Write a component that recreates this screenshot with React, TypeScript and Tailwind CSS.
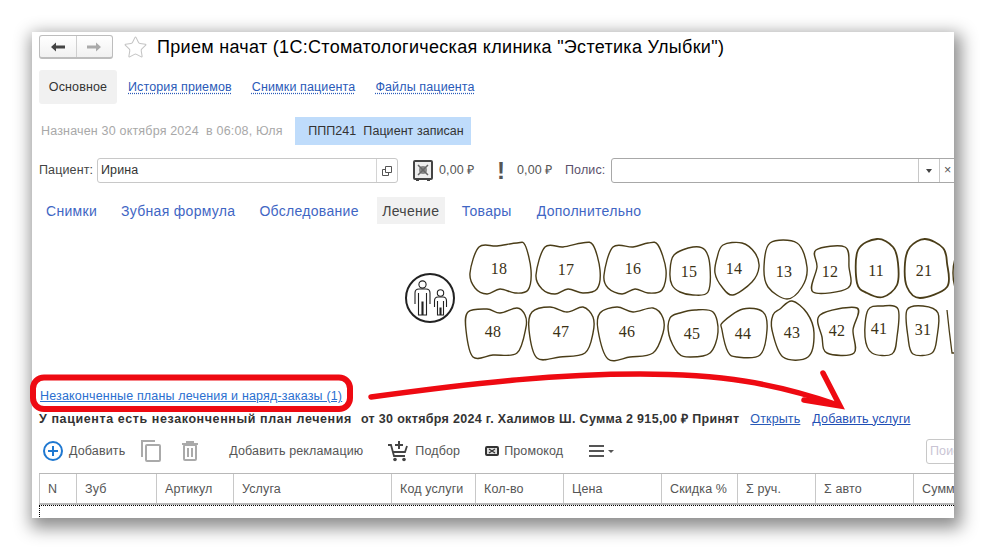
import { Star } from "lucide-react"

type Tooth = { n: number; x: number; y: number; w?: number; pts: number[][] }

const teeth: Tooth[] = [
  { n: 18, x: 499, y: 268, pts: [[479,247],[497,246],[517,243],[525,245],[531,270],[528,290],[515,293],[500,289],[487,294],[475,288],[470,273]] },
  { n: 17, x: 566, y: 269, pts: [[545,247],[563,247],[582,243],[593,245],[600,270],[597,289],[583,293],[568,289],[555,294],[542,289],[536,275]] },
  { n: 16, x: 633, y: 268, pts: [[613,247],[633,247],[648,243],[658,245],[666,270],[662,290],[648,293],[635,289],[622,294],[608,288],[604,275]] },
  { n: 15, x: 689, y: 271, pts: [[693,247],[705,250],[710,267],[708,292],[693,295],[680,292],[672,285],[670,272],[674,255]] },
  { n: 14, x: 734, y: 268, pts: [[723,245],[742,243],[755,253],[759,267],[752,282],[733,295],[722,287],[715,273],[717,258]] },
  { n: 13, x: 784, y: 271, pts: [[770,243],[797,243],[807,267],[802,287],[787,299],[768,287],[764,267]] },
  { n: 12, x: 830, y: 271, pts: [[816,250],[845,247],[849,267],[848,288],[813,292],[817,267]] },
  { n: 11, x: 876, y: 270, w: 1.8, pts: [[877,239],[893,247],[898,263],[897,285],[883,297],[867,293],[857,283],[858,250]] },
  { n: 21, x: 924, y: 270, w: 1.8, pts: [[925,239],[943,248],[947,263],[947,287],[920,298],[907,287],[905,263],[910,247]] },
  { n: 48, x: 493, y: 331, pts: [[468,312],[487,309],[500,313],[517,308],[525,315],[526,327],[517,353],[493,355],[473,357],[466,330]] },
  { n: 47, x: 561, y: 331, pts: [[532,312],[550,307],[567,312],[583,307],[593,317],[593,333],[585,353],[560,357],[537,358],[529,330]] },
  { n: 46, x: 627, y: 331, pts: [[600,313],[617,307],[633,312],[653,308],[663,318],[663,333],[653,353],[630,357],[608,359],[598,330]] },
  { n: 45, x: 692, y: 333, pts: [[695,310],[713,312],[718,332],[710,353],[690,357],[678,353],[669,335],[670,318],[680,313]] },
  { n: 44, x: 743, y: 333, pts: [[723,322],[743,309],[763,312],[767,330],[760,355],[737,357],[728,352],[722,330]] },
  { n: 43, x: 792, y: 332, pts: [[780,309],[792,301],[807,313],[814,333],[808,357],[783,357],[772,330],[773,315]] },
  { n: 42, x: 837, y: 330, pts: [[820,315],[857,308],[853,330],[854,353],[827,353],[822,337]] },
  { n: 41, x: 879, y: 328, pts: [[868,310],[882,306],[898,309],[897,337],[892,354],[872,353],[865,337]] },
  { n: 31, x: 923, y: 329, pts: [[907,310],[923,306],[938,313],[937,337],[932,353],[913,354],[908,337]] },
]

// closed catmull-rom through the traced points
function outline(pts: number[][]) {
  const n = pts.length
  let d = `M${pts[0][0]} ${pts[0][1]}`
  for (let i = 0; i < n; i++) {
    const p0 = pts[(i - 1 + n) % n]
    const p1 = pts[i]
    const p2 = pts[(i + 1) % n]
    const p3 = pts[(i + 2) % n]
    const c1 = [p1[0] + (p2[0] - p0[0]) / 6, p1[1] + (p2[1] - p0[1]) / 6]
    const c2 = [p2[0] - (p3[0] - p1[0]) / 6, p2[1] - (p3[1] - p1[1]) / 6]
    d += `C${c1[0]} ${c1[1]} ${c2[0]} ${c2[1]} ${p2[0]} ${p2[1]}`
  }
  return d + "Z"
}

const columns = [
  { title: "N", w: 38 },
  { title: "Зуб", w: 80 },
  { title: "Артикул", w: 77 },
  { title: "Услуга", w: 158 },
  { title: "Код услуги", w: 84 },
  { title: "Кол-во", w: 88 },
  { title: "Цена", w: 98 },
  { title: "Скидка %", w: 76 },
  { title: "Σ руч.", w: 78 },
  { title: "Σ авто", w: 98 },
  { title: "Сумма", w: 60 },
]

const dottedLink = "text-[#2a5ab8] underline decoration-dotted underline-offset-2"

function TeethChart() {
  return (
    <svg viewBox="400 235 554 130" className="block w-[554px] h-[130px] ml-[361px]">
      {/* adult + child icon */}
      <circle cx="430" cy="298" r="24" fill="none" stroke="#222" strokeWidth="2" />
      <g fill="none" stroke="#222" strokeWidth="1.1">
        <circle cx="422.5" cy="284.5" r="3.6" />
        <path d="M415 304v-11q0-4 4-4h7q4 0 4 4v11M418.5 293v22h3.5v-13h1v13h3.5v-22" />
        <circle cx="440.5" cy="293" r="3.2" />
        <path d="M434.5 307v-6q0-4 3.5-4h5q3.5 0 3.5 4v6M437.5 301v14h2.5v-7h1v7h2.5v-14" />
      </g>
      {teeth.map((t) => (
        <g key={t.n}>
          <path d={outline(t.pts)} fill="none" stroke="#4a3d18" strokeWidth={t.w ?? 1.4} />
          <text x={t.x} y={t.y + 5.5} textAnchor="middle" fontSize="16" fill="#3b3115" fontFamily="'Liberation Serif', serif">
            {t.n}
          </text>
        </g>
      ))}
      {/* next teeth, cut by the window edge */}
      <path d="M960 250q-7 8-7 23t7 24" fill="none" stroke="#4a3d18" strokeWidth="1.5" />
      <path d="M947 310q2 20 5 43h8" fill="none" stroke="#4a3d18" strokeWidth="1.3" />
    </svg>
  )
}

function Annotation() {
  return (
    <svg viewBox="0 0 986 551" className="absolute left-0 top-0 w-[986px] h-[551px] pointer-events-none">
      <rect x="33" y="377.5" width="317" height="31.5" rx="11" fill="none" stroke="#ee0a12" strokeWidth="6" />
      <path d="M371 397C480 382 560 374 640 374S775 383 838 405" fill="none" stroke="#ee0a12" strokeWidth="5.5" strokeLinecap="round" />
      <path d="M823 373L840 406L804 400" fill="none" stroke="#ee0a12" strokeWidth="5.5" strokeLinecap="round" />
    </svg>
  )
}

export default function App() {
  return (
    <div className="relative w-[986px] h-[551px] overflow-hidden bg-white pt-8 pl-8 font-['Liberation_Sans',Arial,sans-serif]">
      <div className="w-[922px] h-[486px] overflow-hidden bg-white shadow-[3px_6px_16px_4px_rgba(0,0,0,0.45)] pl-[7px] text-[12.5px] tracking-[0.13px] text-[#444]">
        {/* Title */}
        <div className="flex items-center h-6 mt-[3px]">
          <div className="flex w-[74px] h-6 rounded-[3px] border border-[#bdbdbd] border-b-2 bg-gradient-to-b from-white to-[#f1f1f1]">
            <div className="flex-1 flex items-center justify-center border-r border-[#cfcfcf]">
              <svg viewBox="0 0 14 10" className="w-[14px] h-[10px]"><path d="M0 5l5-4.5V3.5h9v3H5v3z" fill="#444" /></svg>
            </div>
            <div className="flex-1 flex items-center justify-center">
              <svg viewBox="0 0 14 10" className="w-[14px] h-[10px]"><path d="M14 5L9 .5V3.5H0v3h9v3z" fill="#aaa" /></svg>
            </div>
          </div>
          <Star className="ml-[10px] w-[25px] h-[25px] text-[#c4c4c4]" strokeWidth={1} />
          <h1 className="ml-[9px] text-[18px] leading-6 tracking-[0.3px] text-black">Прием начат (1С:Стоматологическая клиника "Эстетика Улыбки")</h1>
        </div>

        {/* Form pages */}
        <div className="flex items-center h-[34px] mt-[11px]">
          <div className="w-[78px] h-full flex items-center justify-center rounded-[3px] bg-[#f1f1f1] text-[#333]">Основное</div>
          <a className={`ml-[11px] ${dottedLink}`}>История приемов</a>
          <a className={`ml-5 ${dottedLink}`}>Снимки пациента</a>
          <a className={`ml-5 ${dottedLink}`}>Файлы пациента</a>
        </div>

        {/* Status */}
        <div className="flex items-center h-7 mt-[13px] pt-px">
          <span className="ml-[2px] w-[254px] tracking-[0.18px] text-[#a8a8a8] whitespace-pre">Назначен 30 октября 2024  в 06:08, Юля</span>
          <span className="w-[176px] h-7 -mt-px pl-[6px] flex items-center justify-center bg-[#bfdcfb] tracking-[0.05px] text-[#333] whitespace-pre">ППП241  Пациент записан</span>
        </div>

        {/* Patient */}
        <div className="flex items-center h-[25px] mt-[13px] [&>*]:shrink-0">
          <span className="w-[58px] text-[#444]">Пациент:</span>
          <div className="flex w-[301px] h-[25px] rounded-[3px] border border-[#c8c8c8]">
            <span className="flex-1 pl-[3px] leading-[23px] text-[#333]">Ирина</span>
            <div className="w-[21px] flex items-center justify-center border-l border-[#d4d4d4]">
              <svg viewBox="0 0 10 10" className="w-[10px] h-[10px]" fill="none" stroke="#555"><path d="M3.5.5h6v6h-6zM3.5 3.5h-3v6h6v-3" /></svg>
            </div>
          </div>
          <svg viewBox="0 0 20 22" className="ml-[15px] w-5 h-[22px]">
            <rect x="1" y="1" width="18" height="18" rx="1" fill="#eee" stroke="#444" strokeWidth="2" />
            <path d="M3 20h3M14 20h3" stroke="#444" strokeWidth="2" />
            <circle cx="10" cy="10" r="4" fill="#888" />
            <path d="M5 5l10 10M15 5L5 15" stroke="#666" strokeWidth="1.5" />
          </svg>
          <span className="ml-[6px] w-[50px] text-[#555]">0,00 ₽</span>
          <span className="w-[24px] text-center text-[24px] leading-none font-bold text-[#555]">!</span>
          <span className="ml-[4px] w-[48px] text-[#555]">0,00 ₽</span>
          <span className="w-[46px] text-[#5b4f6b]">Полис:</span>
          <div className="flex w-[360px] h-[25px] rounded-l-[3px] border border-[#a8a8a8]">
            <div className="flex-1" />
            <div className="w-[21px] flex items-center justify-center border-l border-[#c8c8c8]">
              <span className="border-x-[3px] border-t-[4px] border-x-transparent border-t-[#444]" />
            </div>
            <div className="w-[31px] pl-[4px] leading-[22px] border-l border-[#c8c8c8] text-[#555]">×</div>
          </div>
        </div>

        {/* Tabs */}
        <div className="flex items-center h-[27px] mt-[14px] text-sm tracking-[0.3px] text-[#3f66c4]">
          <span className="ml-[7px]">Снимки</span>
          <span className="ml-6">Зубная формула</span>
          <span className="ml-6">Обследование</span>
          <span className="ml-[18px] w-[68px] h-full flex items-center justify-center bg-[#f1f1f1] text-[#444]">Лечение</span>
          <span className="ml-[17px]">Товары</span>
          <span className="ml-[25px]">Дополнительно</span>
        </div>

        <div className="mt-[11px]">
          <TeethChart />
        </div>

        {/* Plans */}
        <div className="h-4 mt-[23px] ml-px leading-4">
          <a className="text-[#2a6fd0] underline underline-offset-1 tracking-[0.17px]">Незаконченные планы лечения и наряд-заказы (1)</a>
        </div>
        <div className="flex items-center h-4 mt-[7px] whitespace-pre">
          <b className="text-[#333] tracking-[0.6px]">У пациента есть незаконченный план лечения</b>
          <b className="ml-[9px] text-[#333] tracking-[0.32px]">от 30 октября 2024 г. Халимов Ш. Сумма 2 915,00 ₽ Принят</b>
          <a className="ml-[11px] text-[#2a5ab8] underline">Открыть</a>
          <a className="ml-3 text-[#1f4fb5] underline">Добавить услуги</a>
        </div>

        {/* Toolbar */}
        <div className="flex items-center h-[26px] mt-[11px] text-[#555] [&>*]:shrink-0">
          <svg viewBox="0 0 20 20" className="ml-1 w-5 h-5" fill="none" stroke="#1f78d1" strokeWidth="2"><circle cx="10" cy="10" r="9" /><path d="M10 5v10M5 10h10" /></svg>
          <span className="ml-[6px]">Добавить</span>
          <svg viewBox="0 0 20 22" className="ml-[16px] w-5 h-[22px]" fill="none" stroke="#aaa" strokeWidth="2">
            <path d="M1 17V1h13" />
            <rect x="5" y="5" width="14" height="16" rx="1" />
          </svg>
          <svg viewBox="0 0 16 20" className="ml-[21px] w-4 h-5" fill="none" stroke="#aaa">
            <path d="M0 3h16M5 3V1h6v2" strokeWidth="2" />
            <rect x="2" y="4" width="12" height="15" rx="1" strokeWidth="2" />
            <path d="M6 7v9M10 7v9" strokeWidth="2" />
          </svg>
          <span className="ml-[31px]">Добавить рекламацию</span>
          <svg viewBox="0 0 20 21" className="ml-[25px] w-5 h-[21px]" fill="none" stroke="#444">
            <path d="M0 4h3l3 11h11" strokeWidth="1.8" />
            <path d="M5 11h12l2-6" strokeWidth="1.8" />
            <path d="M11 0v8M7 4h8" strokeWidth="2" />
            <circle cx="7" cy="18.5" r="1.8" fill="#444" strokeWidth="0" />
            <circle cx="16" cy="18.5" r="1.8" fill="#444" strokeWidth="0" />
          </svg>
          <span className="ml-[7px]">Подбор</span>
          <svg viewBox="0 0 14 10" className="ml-[25px] w-[14px] h-[10px]" fill="#ddd" stroke="#333" strokeWidth="2"><rect x="1" y="1" width="12" height="8" rx="1" /><path d="M4 3l6 4M10 3L4 7" strokeWidth="1.2" /></svg>
          <span className="ml-[5px]">Промокод</span>
          <svg viewBox="0 0 15 12" className="ml-[26px] w-[15px] h-3" stroke="#555" strokeWidth="2"><path d="M0 1h15M0 6h15M0 11h15" /></svg>
          <span className="ml-[4px] border-x-[3px] border-t-[3px] border-x-transparent border-t-[#555]" />
          <div className="ml-auto -mr-3 w-[40px] h-[25px] rounded-l-[3px] border border-[#c8c8c8] pl-[3px] leading-[23px] text-[#c9c4d4]">Поиск</div>
        </div>

        {/* Table */}
        <div className="mt-[9px] flex w-max h-[32px] border-t border-b-2 border-[#b8b8b8]">
          {columns.map((c, i) => (
            <div
              key={c.title}
              style={{ width: c.w }}
              className={`flex items-center pl-[8px] pt-[2px] border-r border-[#c8c8c8] text-[#555] ${i === 0 ? "border-l" : ""}`}
            >
              {c.title}
            </div>
          ))}
        </div>
        <div className="h-[14px] border-t border-l border-dotted border-black" />
      </div>
      <Annotation />
    </div>
  )
}
